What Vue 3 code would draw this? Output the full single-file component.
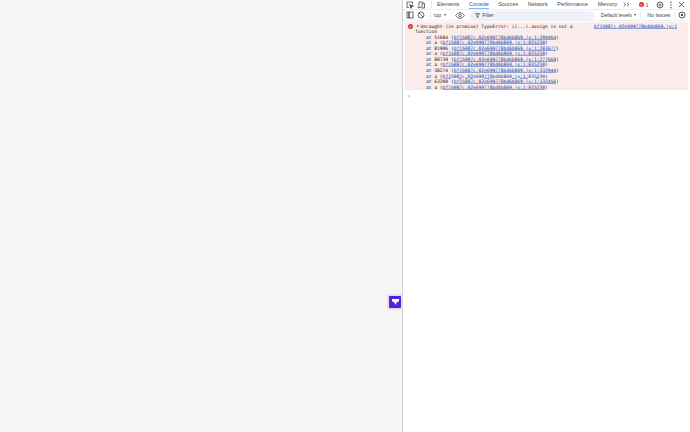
<script setup>
const tabs = ['Elements', 'Console', 'Sources', 'Network', 'Performance', 'Memory']
const file = 'bf15087c.02e699778bd6b869.js:1:'
const frames = [
  ['51684', '200464'], ['a', '835230'],
  ['81996', '283677'], ['a', '835230'],
  ['88739', '277669'], ['a', '835230'],
  ['38274', '332944'], ['a', '835230'],
  ['63200', '332456'], ['a', '835230'],
]
</script>

<template>
  <div class="page">
    <main class="site">
      <button class="widget" aria-label="widget">
        <svg width="7" height="6" viewBox="0 0 7 6"><path d="M0 0h7v2.200L4.600 3.400 3.500 6 2.400 3.400 0 2.200z" fill="#fff"/></svg>
      </button>
    </main>
    <section class="devtools">
      <header class="tabbar">
        <svg class="ico" width="8" height="8" viewBox="0 0 8 8" fill="none" stroke="#474747" stroke-width=".8"><path d="M6.500 3V1H1v5.500h2"/><path d="M3.700 3.700 7.400 5 5.700 5.700 5 7.400z" fill="#474747"/></svg>
        <svg class="dev" width="8" height="8" viewBox="0 0 8 8" fill="none" stroke="#474747" stroke-width=".8"><path d="M2 6V1h4.500"/><path d="M.5 6.600h3.500"/><rect x="5" y="2.600" width="2.400" height="4.400"/></svg>
        <span class="tsep"></span>
        <nav class="tabs">
          <span v-for="t in tabs" :key="t" class="tab" :class="{ on: t === 'Console' }">{{ t }}</span>
        </nav>
        <svg class="more" width="7" height="5" viewBox="0 0 7 5" fill="none" stroke="#474747" stroke-width=".8"><path d="M.8.700 2.800 2.500.8 4.300M4 .7 6 2.500 4 4.300"/></svg>
        <span class="errs"><i class="dot">×</i>1</span>
        <svg class="gear" width="8" height="8" viewBox="0 0 8 8" fill="none" stroke="#474747"><circle cx="4" cy="4" r="2.900" stroke-width=".9"/><circle cx="4" cy="4" r="1" stroke-width=".8"/></svg>
        <svg class="kebab" width="2" height="8" viewBox="0 0 2 8" fill="#474747"><circle cx="1" cy="1.300" r=".7"/><circle cx="1" cy="4" r=".7"/><circle cx="1" cy="6.700" r=".7"/></svg>
        <svg class="close" width="7" height="7" viewBox="0 0 7 7" stroke="#474747" stroke-width=".9"><path d="M1 1l5 5M6 1l-5 5"/></svg>
      </header>
      <div class="toolbar">
        <svg class="side" width="8" height="8" viewBox="0 0 8 8" fill="none" stroke="#474747" stroke-width=".8"><rect x="1" y="1" width="6" height="6"/><path d="M3 1v6" stroke-width="1.400"/></svg>
        <svg class="block" width="8" height="8" viewBox="0 0 8 8" fill="none" stroke="#474747" stroke-width=".8"><circle cx="4" cy="4" r="3"/><path d="M2 2l4 4"/></svg>
        <span class="tsep"></span>
        <span class="ctx">top <i class="caret"></i></span>
        <svg class="eye" width="10" height="7" viewBox="0 0 10 7" fill="none" stroke="#474747" stroke-width=".8"><path d="M.7 3.500C2 1.500 3.400.7 5 .7s3 .8 4.300 2.800C8 5.500 6.600 6.300 5 6.300S2 5.500.7 3.500z"/><circle cx="5" cy="3.500" r="1.300"/></svg>
        <div class="filter">
          <svg width="5" height="5" viewBox="0 0 5 5" fill="none" stroke="#474747" stroke-width=".7"><path d="M.4.600h4.200L3 2.600v2L2 4V2.600z"/></svg>
          <span>Filter</span>
        </div>
        <span class="levels">Default levels <i class="caret"></i></span>
        <span class="sep"></span>
        <span class="issues">No Issues</span>
        <span class="sep"></span>
        <svg class="cfg" width="8" height="8" viewBox="0 0 8 8" fill="none" stroke="#474747"><circle cx="4" cy="4" r="3" stroke-width=".9"/><circle cx="4" cy="4" r="1.200" fill="#474747" stroke="none"/></svg>
      </div>
      <div class="error">
        <div class="first">
          <span class="err-ico">×</span>
          <span class="tri"></span>
          <span class="msg">Uncaught (in promise) TypeError: i(...).assign is not a</span>
          <a class="src">bf15087c.02e699778bd6b869.js:1</a>
        </div>
        <div class="wrap">function</div>
        <div v-for="(f, i) in frames" :key="i" class="frame">at {{ f[0] }} (<a>{{ file }}{{ f[1] }}</a>)</div>
      </div>
      <div class="prompt">›</div>
    </section>
  </div>
</template>

<style>
html, body { margin: 0; padding: 0; overflow: hidden; }
</style>

<style scoped>
.page { display: flex; width: 690px; height: 432px; background: #fff; font-family: "Liberation Sans", Arial, sans-serif; color: #474747; overflow: hidden; }
.site { position: relative; width: 402px; flex: none; background: #f5f5f5; }
.widget { position: absolute; left: 387px; top: 294px; width: 16px; height: 16px; padding: 0; box-sizing: border-box; border: 2px solid #e2e2e6; border-radius: 3px; background: #5521e0; display: flex; align-items: center; justify-content: center; }
.devtools { flex: 1; min-width: 0; border-left: 1px solid #cfd2d6; display: flex; flex-direction: column; }
.tabbar { height: 9px; display: flex; align-items: center; padding-left: 3px; font-size: 5.400px; border-bottom: 1px solid #eceef0; }
.dev { margin-left: 3px; }
.tsep { width: 1px; height: 7px; flex: none; background: #e6e8eb; margin-left: 6px; }
.tabs { display: flex; margin-left: 5px; gap: 9.600px; height: 100%; }
.tab { line-height: 8px; color: #474747; white-space: nowrap; }
.tab.on { color: #0b57d0; border-bottom: 1px solid #8fb2ea; }
.more { margin-left: 5.500px; }
.errs { display: flex; align-items: center; margin-left: 9px; gap: 2px; font-size: 5px; }
.dot { width: 5px; height: 5px; border-radius: 50%; background: #dc362e; color: #fff; font-size: 4px; line-height: 5px; text-align: center; font-style: normal; }
.gear { margin-left: 7.500px; }
.kebab { margin-left: 6.500px; }
.close { margin-left: 5.500px; }
.toolbar { height: 10px; display: flex; align-items: center; padding: 0 3px; font-size: 5.200px; border-bottom: 1px solid #eceef0; }
.block { margin-left: 3px; }
.toolbar .tsep { margin-left: 5px; }
.ctx { display: flex; align-items: center; gap: 2.500px; margin-left: 3px; }
.caret { display: inline-block; border: 1.700px solid transparent; border-top: 2.200px solid #474747; border-bottom: 0; }
.eye { margin-left: 9px; }
.filter { width: 124px; margin-left: 5px; height: 9px; display: flex; align-items: center; gap: 2.500px; padding-left: 5px; box-sizing: border-box; border-radius: 5px; background: #edf2fa; }
.levels { display: flex; align-items: center; gap: 2.500px; margin-left: 7px; white-space: nowrap; }
.sep { width: 1px; height: 7px; background: #e6e8eb; flex: none; margin: 0 3px 0 4px; }
.issues { margin-left: 3px; white-space: nowrap; }
.error { margin: 1px 2px 0 2px; padding: 1.600px 0 0 0; height: 68px; box-sizing: border-box; background: #faecea; font: 4.600px/5.550px "DejaVu Sans Mono", monospace; color: #241412; }
.first { display: flex; align-items: flex-start; }
.err-ico { width: 5px; height: 5px; margin: .5px 0 0 3px; border-radius: 50%; background: #dc362e; color: #fff; font: 4px/5px "Liberation Sans", sans-serif; text-align: center; flex: none; }
.tri { margin: 1.500px 0 0 3.500px; border: 1.500px solid transparent; border-left: 2.200px solid #474747; border-right: 0; flex: none; }
.msg { margin-left: 2px; white-space: nowrap; }
.src { margin-left: auto; margin-right: 11px; color: #0a3aa0; text-decoration: underline; text-decoration-color: #8aa3d8; text-underline-offset: 0; white-space: nowrap; }
.wrap { margin-left: 10px; }
.frame { margin-left: 21px; white-space: nowrap; }
.frame a { color: #0a3aa0; text-decoration: underline; text-decoration-color: #8aa3d8; text-underline-offset: 0; }
.prompt { margin: 3px 0 0 4px; font: 6px/6px "DejaVu Sans Mono", monospace; color: #1a5fd0; }
</style>
